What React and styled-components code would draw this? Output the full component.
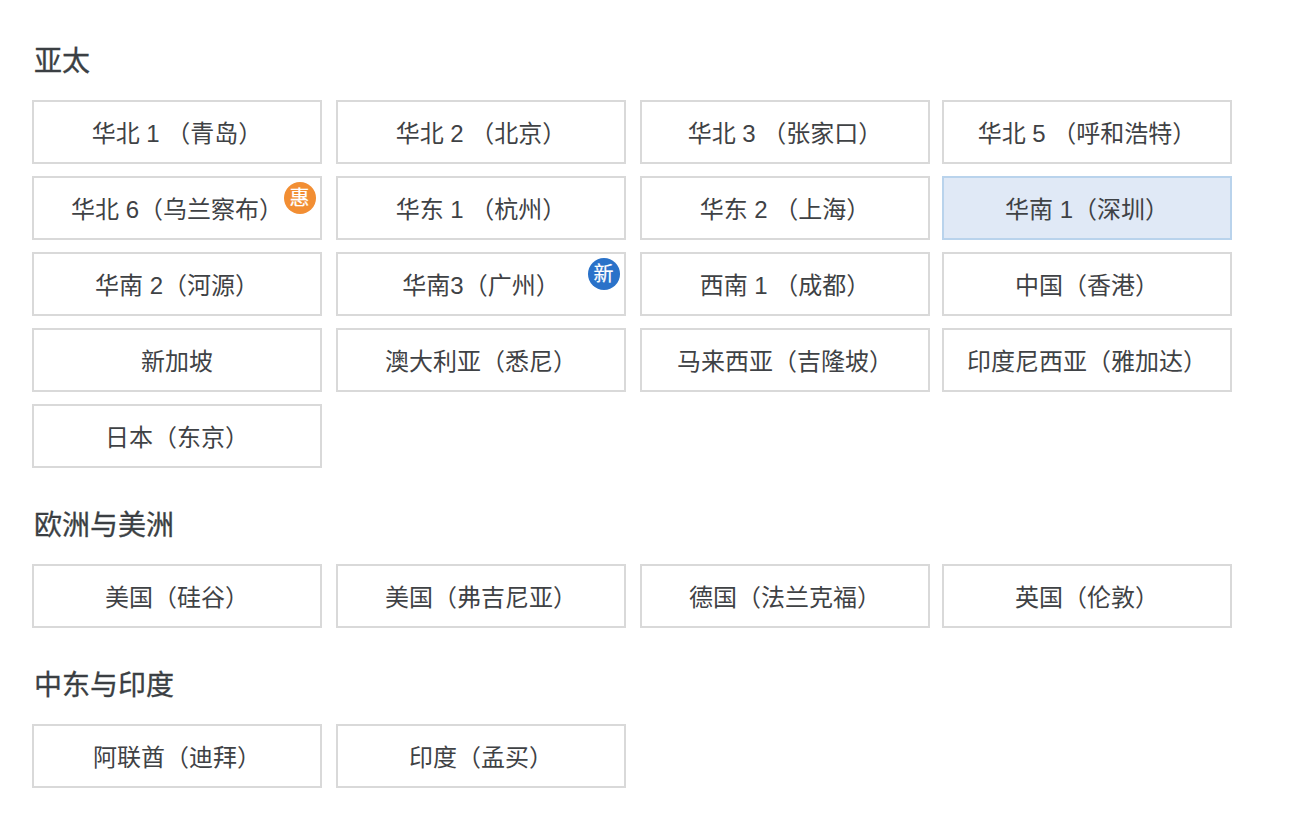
import React from 'react';
import styled, { createGlobalStyle } from 'styled-components';

const Global = createGlobalStyle`
  html, body { margin: 0; padding: 0; background: #fff; }
  body { font-family: "Liberation Sans", "Noto Sans CJK SC", sans-serif; color: #3f4245; }
`;

const Page = styled.main`
  width: 1306px;
  height: 830px;
  box-sizing: border-box;
  padding: 40px 0 0 32px;
  overflow: hidden;
`;

const Section = styled.section`
  margin-bottom: 36px;
`;

const Title = styled.h2`
  box-sizing: border-box;
  margin: 0 0 20px 2px;
  height: 40px;
  padding-top: 4px;
  line-height: 36px;
  font-size: 28px;
  font-weight: 400;
  color: #3b3f43;
  -webkit-text-stroke: 0.3px #3b3f43;
`;

const Grid = styled.div`
  display: grid;
  grid-template-columns: 304px 304px 302px 290px;
  grid-auto-rows: 64px;
  row-gap: 12px;
`;

const Region = styled.button`
  position: relative;
  width: 290px;
  height: 64px;
  box-sizing: border-box;
  padding: 4px 0 0;
  border: 2px solid ${p => (p.$active ? '#b9d3ec' : '#d9d9d9')};
  background: ${p => (p.$active ? '#e0e9f6' : '#fff')};
  color: #3f4245;
  font: 400 24px/56px "Liberation Sans", "Noto Sans CJK SC", sans-serif;
  text-align: center;
  white-space: pre;
`;

const Badge = styled.span`
  position: absolute;
  top: 4px;
  right: 4px;
  width: 32px;
  height: 32px;
  border-radius: 50%;
  background: ${p => p.$color};
  color: #fff;
  font-size: 20px;
  line-height: 33px;
  text-align: center;
  text-indent: -1px;
  -webkit-text-stroke: 0.2px #fff;
`;

const sections = [
  {
    title: '亚太',
    items: [
      { t: '华北 1 （青岛）' },
      { t: '华北 2 （北京）' },
      { t: '华北 3 （张家口）' },
      { t: '华北 5 （呼和浩特）' },
      { t: '华北 6（乌兰察布）', badge: '惠', color: '#f28e33' },
      { t: '华东 1 （杭州）' },
      { t: '华东 2 （上海）' },
      { t: '华南 1（深圳）', active: true },
      { t: '华南 2（河源）' },
      { t: '华南3（广州）', badge: '新', color: '#2a72c9' },
      { t: '西南 1 （成都）' },
      { t: '中国（香港）' },
      { t: '新加坡' },
      { t: '澳大利亚（悉尼）' },
      { t: '马来西亚（吉隆坡）' },
      { t: '印度尼西亚（雅加达）' },
      { t: '日本（东京）' },
    ],
  },
  {
    title: '欧洲与美洲',
    items: [
      { t: '美国（硅谷）' },
      { t: '美国（弗吉尼亚）' },
      { t: '德国（法兰克福）' },
      { t: '英国（伦敦）' },
    ],
  },
  {
    title: '中东与印度',
    items: [{ t: '阿联酋（迪拜）' }, { t: '印度（孟买）' }],
  },
];

export default function App() {
  return (
    <Page>
      <Global />
      {sections.map(s => (
        <Section key={s.title}>
          <Title>{s.title}</Title>
          <Grid>
            {s.items.map(i => (
              <Region key={i.t} $active={i.active}>
                {i.t}
                {i.badge && <Badge $color={i.color}>{i.badge}</Badge>}
              </Region>
            ))}
          </Grid>
        </Section>
      ))}
    </Page>
  );
}
